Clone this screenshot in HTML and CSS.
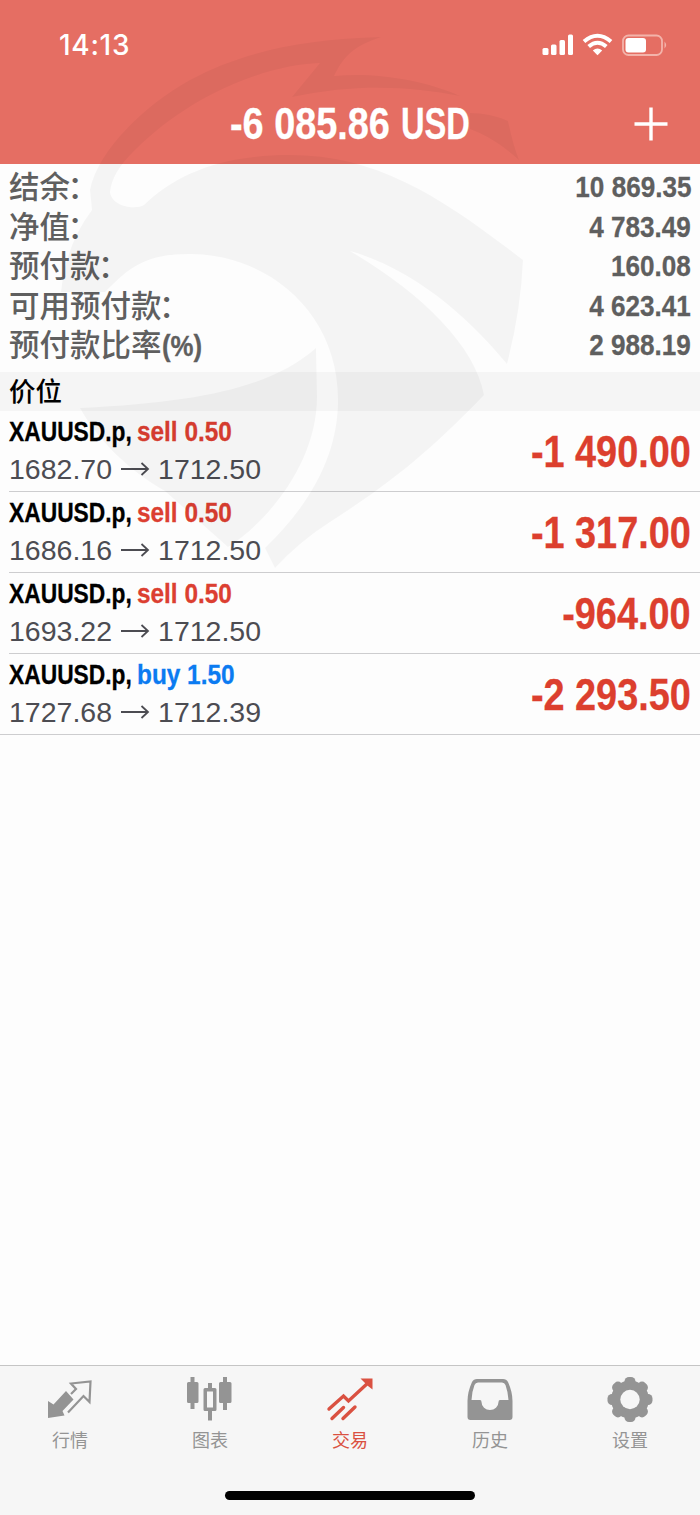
FILE: index.html
```html
<!DOCTYPE html>
<html lang="zh-CN">
<head>
<meta charset="utf-8">
<title>交易</title>
<link rel="stylesheet" href="styles.css">
</head>
<body>
<div class="app">
  <header class="header">
    <div class="status">
      <span class="clock">14:13</span>
      <svg class="status-icons" width="126" height="24" viewBox="0 0 126 24" fill="#fff">
        <rect x="0.500" y="15" width="6" height="7" rx="1.5"/><rect x="9" y="11.500" width="5.500" height="10.500" rx="1.500"/><rect x="17.500" y="7" width="5.500" height="15" rx="1.500"/><rect x="26" y="1.500" width="5" height="20.500" rx="1.500"/>
        <g fill="none" stroke="#fff" stroke-width="4"><path d="M42 8.500Q55.500 -3 69 8.500"/><path d="M46.700 13.500Q55.500 6 64.300 13.500"/></g>
        <path d="M50.800 17.500Q55.500 13.500 60.200 17.500L55.500 22.200Z"/>
        <rect x="81" y="2.500" width="39" height="19.500" rx="5.500" fill="none" stroke="#f3b3aa" stroke-width="1.800"/>
        <rect x="83.500" y="5" width="20.500" height="14.500" rx="3"/>
        <path d="M122.500 8.500q3.400 3.500 0 7z" fill="#f3b3aa"/>
      </svg>
    </div>
    <div class="title-row">
      <h1 class="title"><span class="cond title-amount">-6 085.86</span><span class="cond title-unit">USD</span></h1>
      <svg class="plus" width="34" height="34" viewBox="0 0 34 34"><path d="M17 .5V33.500M.5 17H33.500" stroke="#fff" stroke-width="3.400"/></svg>
    </div>
  </header>

  <section class="account">
    <div class="line"><span>结余<span class="colon">：</span></span><b class="cond value">10 869.35</b></div>
    <div class="line"><span>净值<span class="colon">：</span></span><b class="cond value">4 783.49</b></div>
    <div class="line"><span>预付款<span class="colon">：</span></span><b class="cond value">160.08</b></div>
    <div class="line"><span>可用预付款<span class="colon">：</span></span><b class="cond value">4 623.41</b></div>
    <div class="line"><span>预付款比率<b class="cond percent">(%)</b></span><b class="cond value">2 988.19</b></div>
  </section>

  <h2 class="section">价位</h2>

  <ul class="positions">
    <li class="position">
      <div class="detail">
        <div class="name"><b class="cond symbol">XAUUSD.p,</b><b class="cond side sell">sell 0.50</b></div>
        <div class="prices"><span class="price">1682.70</span><svg class="arrow" width="30" height="14" viewBox="0 0 30 14"><path d="M1 7H28M21.500 1L28 7L21.500 13"/></svg><span class="price">1712.50</span></div>
      </div>
      <b class="cond profit">-1 490.00</b>
    </li>
    <li class="position">
      <div class="detail">
        <div class="name"><b class="cond symbol">XAUUSD.p,</b><b class="cond side sell">sell 0.50</b></div>
        <div class="prices"><span class="price">1686.16</span><svg class="arrow" width="30" height="14" viewBox="0 0 30 14"><path d="M1 7H28M21.500 1L28 7L21.500 13"/></svg><span class="price">1712.50</span></div>
      </div>
      <b class="cond profit">-1 317.00</b>
    </li>
    <li class="position">
      <div class="detail">
        <div class="name"><b class="cond symbol">XAUUSD.p,</b><b class="cond side sell">sell 0.50</b></div>
        <div class="prices"><span class="price">1693.22</span><svg class="arrow" width="30" height="14" viewBox="0 0 30 14"><path d="M1 7H28M21.500 1L28 7L21.500 13"/></svg><span class="price">1712.50</span></div>
      </div>
      <b class="cond profit">-964.00</b>
    </li>
    <li class="position">
      <div class="detail">
        <div class="name"><b class="cond symbol">XAUUSD.p,</b><b class="cond side buy">buy 1.50</b></div>
        <div class="prices"><span class="price">1727.68</span><svg class="arrow" width="30" height="14" viewBox="0 0 30 14"><path d="M1 7H28M21.500 1L28 7L21.500 13"/></svg><span class="price">1712.39</span></div>
      </div>
      <b class="cond profit">-2 293.50</b>
    </li>
  </ul>

  <footer class="footer">
    <nav class="tabs">
      <a class="tab">
        <svg width="48" height="48" viewBox="0 0 48 48"><path d="M2 24L7.500 27.500L20 14L27.500 22.500L16.500 34L18.500 38.500L2 41Z" fill="#949494"/><path d="M22 35.500L37.500 19L43.500 25L44.500 4.500L25 6.500L30 12L25 17" fill="none" stroke="#949494" stroke-width="2.200"/></svg>
        <span>行情</span>
      </a>
      <a class="tab">
        <svg width="48" height="48" viewBox="0 0 48 48" fill="#949494"><path d="M4.500 0h4v5H11q1.500 0 1.500 1.500v18Q12.500 26 11 26H8.500v6h-4v-6H2.500Q1 26 1 24.500v-18Q1 5 2.500 5h2zM37 0h4v5h3q1.500 0 1.500 1.500v18q0 1.500-1.500 1.500h-3v7h-4v-7h-2.500Q33 26 33 24.500v-18Q33 5 34.500 5H37z"/><path fill-rule="evenodd" d="M22 6h4v5h3q1.500 0 1.500 1.500v20Q30.500 34 29 34h-3v9.500h-4V34h-3q-1.500 0-1.500-1.500v-20Q17.500 11 19 11h3zM21 14.500v16h6v-16z"/></svg>
        <span>图表</span>
      </a>
      <a class="tab active">
        <svg width="48" height="48" viewBox="0 0 48 48"><path d="M3 32L17.500 19L22.500 24L43 5M6 41.500L17.500 30.500M17 41.500L29 30" fill="none" stroke="#da5141" stroke-width="3.400" stroke-linecap="round" stroke-linejoin="miter"/><path d="M34.500 1.500H46.500V12.500L42 9L39 6Z" fill="#da5141"/></svg>
        <span>交易</span>
      </a>
      <a class="tab">
        <svg width="48" height="48" viewBox="0 0 48 48"><path fill-rule="evenodd" fill="#949494" d="M11 2H37Q40.500 2 42 5Q46.500 15 46.500 24V40Q46.500 43 43.500 43H4.500Q1.500 43 1.500 40V24Q1.500 15 6 5Q7.500 2 11 2ZM12 5.500Q9.500 5.500 8.500 8Q5.800 15 5.500 23H14Q15.500 23 15.500 25A8.500 8 0 0 0 32.500 25Q32.500 23 34 23H42.500Q42 15 39.500 8Q38.500 5.500 36 5.500Z"/></svg>
        <span>历史</span>
      </a>
      <a class="tab">
        <svg width="48" height="48" viewBox="0 0 48 48"><g transform="translate(24 22.500)"><g fill="#949494"><circle r="19"/><rect x="-5.500" y="-22.500" width="11" height="45" rx="4.500"/><rect x="-5.500" y="-22.500" width="11" height="45" rx="4.500" transform="rotate(45)"/><rect x="-5.500" y="-22.500" width="11" height="45" rx="4.500" transform="rotate(90)"/><rect x="-5.500" y="-22.500" width="11" height="45" rx="4.500" transform="rotate(135)"/></g><circle r="9.700" fill="#f6f6f6"/></g></svg>
        <span>设置</span>
      </a>
    </nav>
    <div class="home-bar"></div>
  </footer>

  <svg class="watermark" width="700" height="600" viewBox="0 0 700 600">
    <path d="M90 190C98 150 145 105 190 80C240 53 300 39 381 37C350 47 342 60 334 76C375 72 425 80 460 96C410 87 360 83 292 97L320 63C265 65 190 95 135 150Q112 172 110 192C112 207 135 210 144 205C175 175 220 155 290 155C380 155 445 200 523 260Q521 310 507 364C475 325 420 271 350 251C420 292 475 345 484 395C425 457 380 490 330 522Q300 541 275 568L265 548C315 500 338 450 338 400C338 310 265 254 190 254C145 254 130 267 105 292H61Q66 244 92 210Z"/>
    <path d="M316 348C275 384 210 402 80 408C98 440 128 470 165 491L228 547C270 520 318 460 317 395Z"/>
    <path d="M470 113Q490 113 508 121Q513 145 519 160Q495 138 470 129Z"/>
  </svg>
</div>
</body>
</html>
```
FILE: styles.css
```css
* { box-sizing: border-box; }

body {
  margin: 0;
  background: #fdfdfd;
  font-family: "Liberation Sans", "Noto Sans CJK SC", sans-serif;
}

.app {
  position: relative;
  display: flex;
  flex-direction: column;
  width: 700px;
  height: 1515px;
  overflow: hidden;
}

.watermark {
  position: absolute;
  top: 0;
  left: 0;
  fill: rgba(0, 0, 0, 0.036);
  pointer-events: none;
}

/* Narrowed bold face */
.cond {
  display: inline-block;
  font-weight: bold;
  white-space: pre;
  transform: scaleX(0.87);
  transform-origin: left center;
  -webkit-text-stroke: 0.3px currentColor;
}

.header {
  height: 164px;
  flex: none;
  background: #e56e63;
  color: #fff;
}

.status {
  display: flex;
  justify-content: space-between;
  height: 88px;
  padding: 29px 32px 0 59px;
}

.clock {
  font: 500 28px/32px Inter, sans-serif;
  letter-spacing: 0.7px;
}

.status-icons { margin-top: 4px; }

.title-row {
  display: grid;
  grid-template-columns: 1fr auto 1fr;
  align-items: center;
  height: 72px;
}

.title {
  grid-column: 2;
  display: flex;
  margin: 0 0 1px;
  font-size: 43.500px;
  line-height: 50px;
}

.title-amount { width: 171px; }

.title-unit {
  width: 69px;
  transform: scaleX(0.75);
}

.plus {
  justify-self: end;
  margin-right: 32px;
}

.account {
  flex: none;
  height: 208px;
  padding: 4px 9px 0;
  color: #5f5f5f;
  font-size: 30.5px;
  font-weight: 500;
}

.line {
  display: flex;
  justify-content: space-between;
  height: 39.500px;
  line-height: 39.500px;
  white-space: nowrap;
}

.colon { margin-left: -2.500px; }

.value {
  font-size: 30px;
  line-height: 37.500px;
  transform-origin: right center;
}

.percent {
  font-size: 30px;
  line-height: 36px;
  transform: scaleX(0.86);
}

.section {
  flex: none;
  height: 39px;
  margin: 0;
  padding-left: 9px;
  background: #f5f5f5;
  font-size: 26.5px;
  font-weight: 500;
  line-height: 41px;
}

.positions {
  flex: 1;
  margin: 0;
  padding: 0;
  list-style: none;
}

.position {
  display: flex;
  justify-content: space-between;
  height: 81px;
  margin-left: 9px;
  padding-right: 9px;
  border-bottom: 1px solid #cdcdcf;
}

.position:last-child {
  margin-left: 0;
  padding-left: 9px;
}

.name {
  display: flex;
  height: 40px;
  font-size: 28.500px;
  line-height: 41px;
}

.symbol {
  width: 127.500px;
  transform: scaleX(0.8);
}

.side { transform: scaleX(0.855); }
.sell { color: #dc3f31; }
.buy { color: #0b7bf1; }

.prices {
  display: flex;
  align-items: center;
  gap: 8px;
  height: 36px;
  color: #4c4c52;
  font-size: 28.500px;
}

.arrow {
  fill: none;
  stroke: #4c4c52;
  stroke-width: 1.800;
}

.profit {
  color: #dc3f2e;
  font-size: 43.500px;
  line-height: 82px;
  transform: scaleX(0.87);
  transform-origin: right center;
}

.footer {
  flex: none;
  height: 150px;
  border-top: 1px solid #c5c5c5;
  background: #f6f6f6;
}

.tabs {
  display: grid;
  grid-template-columns: repeat(5, 1fr);
  height: 125px;
}

.tab {
  display: flex;
  flex-direction: column;
  align-items: center;
  padding-top: 11px;
  color: #949494;
  font-size: 18px;
  line-height: 32px;
}

.active { color: #da5141; }

.home-bar {
  width: 250px;
  height: 9px;
  margin: 0 auto;
  border-radius: 5px;
  background: #000;
}
```
